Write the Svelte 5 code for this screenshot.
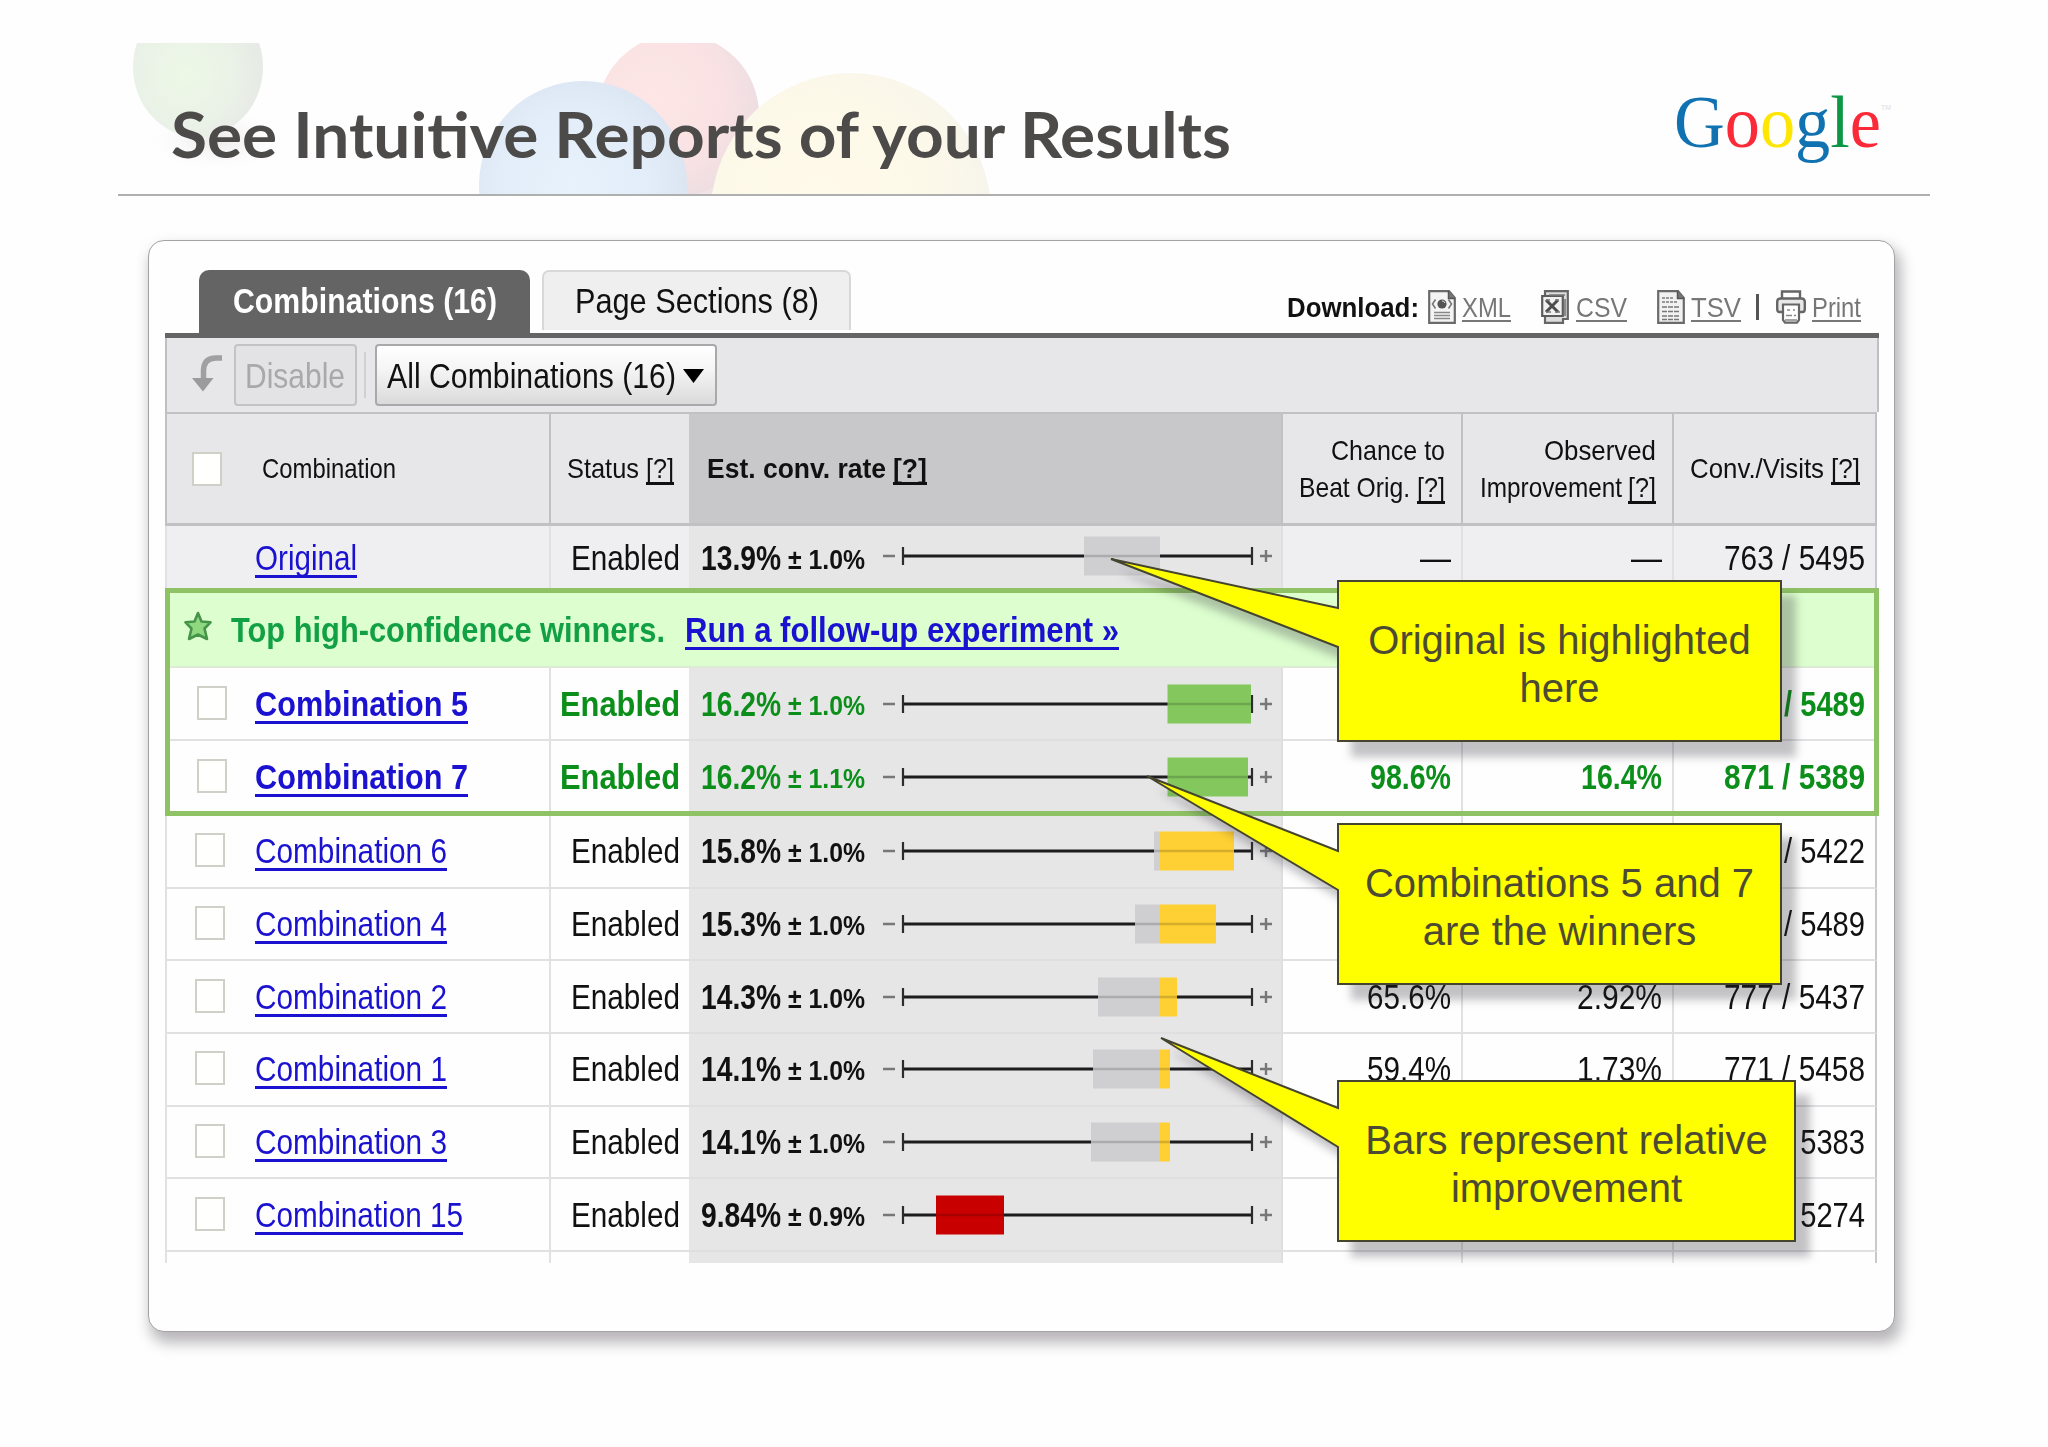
<script>
    /* Report rows: bars are [from, to, colour] in pixels along the 350px axis */
    const original = { name: 'Original', nameW: 102, rate: '13.9%', margin: '± 1.0%', bars: [[182, 258, 'gray']], chance: '—', improvement: '—', visits: '763 / 5495' }

    const winners = [
        { name: 'Combination 5', nameW: 213, rate: '16.2%', margin: '± 1.0%', bars: [[265.5, 349, 'green']], chance: '', improvement: '', visits: '/ 5489' },
        { name: 'Combination 7', nameW: 213, rate: '16.2%', margin: '± 1.1%', bars: [[265.5, 346, 'green']], chance: '98.6%', improvement: '16.4%', visits: '871 / 5389' }
    ]

    const others = [
        { name: 'Combination 6', nameW: 192, rate: '15.8%', margin: '± 1.0%', bars: [[252, 258, 'gray'], [258, 332, 'yellow']], chance: '', improvement: '', visits: '/ 5422' },
        { name: 'Combination 4', nameW: 192, rate: '15.3%', margin: '± 1.0%', bars: [[233, 258, 'gray'], [258, 314, 'yellow']], chance: '', improvement: '', visits: '/ 5489' },
        { name: 'Combination 2', nameW: 192, rate: '14.3%', margin: '± 1.0%', bars: [[196, 258, 'gray'], [258, 275, 'yellow']], chance: '65.6%', improvement: '2.92%', visits: '777 / 5437' },
        { name: 'Combination 1', nameW: 192, rate: '14.1%', margin: '± 1.0%', bars: [[191, 258, 'gray'], [258, 268, 'yellow']], chance: '59.4%', improvement: '1.73%', visits: '771 / 5458' },
        { name: 'Combination 3', nameW: 192, rate: '14.1%', margin: '± 1.0%', bars: [[189, 258, 'gray'], [258, 268, 'yellow']], chance: '', improvement: '', visits: '/ 5383' },
        { name: 'Combination 15', nameW: 208, rate: '9.84%', margin: '± 0.9%', bars: [[34, 102, 'red']], chance: '', improvement: '', visits: '/ 5274' }
    ]

    /* Callouts: the tail is the tip point followed by its two joints on the left edge */
    const callouts = [
        { x: 1338, y: 581, w: 443, h: 160, tip: [-227, -22], joints: [27, 66], lines: ['Original is highlighted', 'here'] },
        { x: 1338, y: 824, w: 443, h: 160, tip: [-191, -48], joints: [27, 66], lines: ['Combinations 5 and 7', 'are the winners'] },
        { x: 1338, y: 1081, w: 457, h: 160, tip: [-177, -43], joints: [27, 66], lines: ['Bars represent relative', 'improvement'] }
    ]

    /* Condenses a piece of text to the given width */
    function fit(node, width) {
        const natural = node.getBoundingClientRect().width
        if (!natural) return
        node.style.transform = `scaleX(${width / natural})`
        node.style.marginRight = `${width - natural}px`
    }

    function visitsWidth(text) {
        return text.startsWith('/') ? 81 : 141
    }
</script>

{#snippet help(w, gap)}
    <a class="help" style:margin-left="{gap}px" use:fit={w} href="#help">[?]</a>
{/snippet}

{#snippet row(item, kind)}
    <div class="row {kind}">
        <div class="cell name">
            {#if kind !== 'original'}<span class="box"></span>{/if}
            <a class="t" use:fit={item.nameW} href="#combination">{item.name}</a>
        </div>
        <div class="cell status"><span class="t" use:fit={kind === 'winner' ? 120 : 109}>Enabled</span></div>
        <div class="cell rate">
            <b class="t" use:fit={80}>{item.rate}</b>
            <b class="t small" use:fit={77}>{item.margin}</b>
            <svg class="axis" width="390" height="40" viewBox="-20 0 390 40">
                <path d="M-19 20h12M358 20h12M364 14v12" stroke="#77777a" stroke-width="2.4" />
                <path d="M1 20H350" stroke="#1c1c1e" stroke-width="2.8" />
                <path d="M1 11v18M350 11v18" stroke="#2c2c2e" stroke-width="2.2" />
                {#each item.bars as [from, to, colour]}
                    <rect class={colour} x={from} y="0.5" width={to - from} height="39" />
                    <path d="M{from} 20H{to}" stroke="#000" stroke-opacity="0.17" stroke-width="2.6" />
                {/each}
            </svg>
        </div>
        <div class="cell num">
            {#if item.chance === '—'}<span class="t" use:fit={31}>—</span>
            {:else if item.chance}<span class="t" use:fit={kind === 'winner' ? 81 : 84}>{item.chance}</span>{/if}
        </div>
        <div class="cell num">
            {#if item.improvement === '—'}<span class="t" use:fit={31}>—</span>
            {:else if item.improvement}<span class="t" use:fit={kind === 'winner' ? 81 : 85}>{item.improvement}</span>{/if}
        </div>
        <div class="cell num last"><span class="t" use:fit={visitsWidth(item.visits)}>{item.visits}</span></div>
    </div>
{/snippet}

<main>
    <header>
        <!-- Faded balls behind the title -->
        <svg class="balls" width="1812" height="151" viewBox="118 43 1812 151">
            <defs>
                <radialGradient id="g" cx="0.4" cy="0.55" r="0.65">
                    <stop offset="0" stop-color="#edf8e6" /><stop offset="0.6" stop-color="#eaf1e7" /><stop offset="1" stop-color="#e6e8e5" />
                </radialGradient>
                <radialGradient id="r" cx="0.35" cy="0.4" r="0.7">
                    <stop offset="0" stop-color="#fde6e4" /><stop offset="0.6" stop-color="#fae2e4" /><stop offset="1" stop-color="#ebdde1" />
                </radialGradient>
                <radialGradient id="b" cx="0.45" cy="0.5" r="0.6">
                    <stop offset="0" stop-color="#e7f2fc" /><stop offset="0.6" stop-color="#e2edf9" /><stop offset="1" stop-color="#d9e4f0" />
                </radialGradient>
                <radialGradient id="y" cx="0.4" cy="0.45" r="0.62">
                    <stop offset="0" stop-color="#fffaea" /><stop offset="0.6" stop-color="#fdf9e9" /><stop offset="1" stop-color="#f6f4ec" />
                </radialGradient>
                <radialGradient id="s">
                    <stop offset="0" stop-color="#e9e9e9" /><stop offset="1" stop-color="#fff" stop-opacity="0" />
                </radialGradient>
            </defs>
            <ellipse cx="215" cy="140" rx="75" ry="34" fill="url(#s)" />
            <ellipse cx="198" cy="67" rx="65" ry="70" fill="url(#g)" />
            <path d="M640 130H740L712 194H640Z" fill="#f0e4e7" />
            <circle cx="678" cy="115" r="81" fill="url(#r)" />
            <circle cx="583" cy="185" r="104" fill="url(#b)" />
            <circle cx="851" cy="213" r="140" fill="url(#y)" />
        </svg>
        <h1 use:fit={1060}>See Intuitive Reports of your Results</h1>
        <div class="logo">
            <span class="word" use:fit={207}><i class="lb">G</i><i class="lr">o</i><i class="ly">o</i><i class="lb">g</i><i class="lg">l</i><i class="lr">e</i></span>
            <sup>TM</sup>
        </div>
    </header>

    <section class="card">
        <div class="tabs">
            <div class="tab active"><span use:fit={264}>Combinations (16)</span></div>
            <div class="tab"><span use:fit={244}>Page Sections (8)</span></div>
            <div class="download">
                <b use:fit={132}>Download:</b>
                <svg width="28" height="34" viewBox="0 0 28 34" style:margin-left="9px">
                    <path d="M1.2 1.2H21L26.8 8V32.8H1.2Z" fill="#f4f4f4" stroke="#6a6a6a" stroke-width="2.2" />
                    <path d="M20.5 1v7.5H27" fill="#777" stroke="#555" stroke-width="1.5" />
                    <circle cx="14" cy="14" r="4.6" fill="#555" /><path d="M14 11a3 3 0 0 1 3 2" stroke="#ddd" fill="none" />
                    <path d="M7.5 9.5L4.5 14l3 4.5M20.5 9.5L23.5 14l-3 4.5" fill="none" stroke="#777" stroke-width="1.6" />
                    <path d="M6 22.5h16M6 25.5h16M6 28.5h16" stroke="#888" stroke-width="1.5" />
                </svg>
                <a style:margin-left="6px" use:fit={49} href="#xml">XML</a>
                <svg width="28" height="34" viewBox="0 0 28 34" style:margin-left="30px">
                    <path d="M4 1.2H26.8V29H22V32.8H4Z" fill="#ddd" stroke="#666" stroke-width="2.2" />
                    <path d="M1.2 6H21.8V26H1.2Z" fill="#f0f0f0" stroke="#5c5c5c" stroke-width="2.2" />
                    <path d="M5 10l12 12M17 10L5 22" stroke="#4c4c4c" stroke-width="3" />
                    <path d="M5 10h4M14 10h4M5 22h5M14 22h5M24 9v17M8 5h16" stroke="#777" stroke-width="1.6" />
                </svg>
                <a style:margin-left="7px" use:fit={51} href="#csv">CSV</a>
                <svg width="28" height="34" viewBox="0 0 28 34" style:margin-left="30px">
                    <path d="M1.2 1.2H21L26.8 8V32.8H1.2Z" fill="#f1f1f1" stroke="#6a6a6a" stroke-width="2.2" />
                    <path d="M20.5 1v7.5H27" fill="#777" stroke="#555" stroke-width="1.5" />
                    <path d="M5 8h11M5 12h16" stroke="#999" stroke-width="2" stroke-dasharray="3 1" />
                    <path d="M5 17h18M5 21.5h18M5 26h18M5 29.5h18" stroke="#777" stroke-width="1.7" stroke-dasharray="5 1" />
                </svg>
                <a style:margin-left="6px" use:fit={50} href="#tsv">TSV</a>
                <i class="bar"></i>
                <svg width="30" height="34" viewBox="0 0 30 34" style:margin-left="17px">
                    <path d="M6 9V1.5H24V9" fill="#fff" stroke="#666" stroke-width="2.4" />
                    <path d="M6.5 22H3.5Q1.2 22 1.2 19V12Q1.2 8.5 4.5 8.5H25.5Q28.8 8.5 28.8 12V19Q28.8 22 26.5 22H23.5" fill="#e8e8e8" stroke="#666" stroke-width="2.4" />
                    <path d="M7 14.5H23V30L21 32.6H9L7 30Z" fill="#fff" stroke="#666" stroke-width="2.2" />
                    <path d="M11 20h3M17 20h2M10 25.5h6M18 25.5h2M9 30h12" stroke="#888" stroke-width="1.6" />
                </svg>
                <a style:margin-left="6px" use:fit={49} href="#print">Print</a>
            </div>
        </div>

        <div class="toolbar">
            <svg class="arrow" width="32" height="38" viewBox="0 0 32 38">
                <path d="M30 4H24Q11.500 4 11.500 17V25" fill="none" stroke="#a0a0a2" stroke-width="5.5" />
                <path d="M0 24H21.500L11 37.500Z" fill="#9b9b9d" />
            </svg>
            <span class="button disabled"><span use:fit={100}>Disable</span></span>
            <i class="divider"></i>
            <span class="button">
                <span use:fit={289}>All Combinations (16)</span>
                <svg width="21" height="14" viewBox="0 0 21 14"><path d="M0 0H21L10.5 14Z" /></svg>
            </span>
        </div>

        <div class="table">
            <div class="row head">
                <div class="cell name"><span class="box"></span><span class="t" use:fit={134}>Combination</span></div>
                <div class="cell status"><span class="t" use:fit={72}>Status</span>{@render help(28, 7)}</div>
                <div class="cell rate"><b class="t" use:fit={179}>Est. conv. rate</b><b>{@render help(34, 7)}</b></div>
                <div class="cell num two">
                    <div><span use:fit={114}>Chance to</span></div>
                    <div><span use:fit={111}>Beat Orig.</span>{@render help(28, 7)}</div>
                </div>
                <div class="cell num two">
                    <div><span use:fit={112}>Observed</span></div>
                    <div><span use:fit={142}>Improvement</span>{@render help(28, 6)}</div>
                </div>
                <div class="cell num last"><span use:fit={134}>Conv./Visits</span>{@render help(29, 7)}</div>
            </div>

            {@render row(original, 'original')}

            <div class="winners">
                <div class="banner">
                    <svg width="30" height="32" viewBox="0 0 30 32">
                        <path d="M15 3L18.500 11.500 27.500 12.300 21.500 18.500 24 29 15 24.500 6 29 8.500 18.500 2.500 12.300 11.500 11.500Z" fill="#90d880" stroke="#45944a" stroke-width="2.6" stroke-linejoin="round" />
                    </svg>
                    <span use:fit={434}>Top high-confidence winners.</span>
                    <a use:fit={434} href="#follow-up">Run a follow-up experiment »</a>
                </div>
                {#each winners as item}
                    {@render row(item, 'winner')}
                {/each}
            </div>

            {#each others as item}
                {@render row(item, 'plain')}
            {/each}

            <!-- Next row, cut off by the end of the table -->
            <div class="row stub">
                <div class="cell"></div><div class="cell status"></div><div class="cell rate"></div>
                <div class="cell"></div><div class="cell"></div><div class="cell last"></div>
            </div>
        </div>
    </section>

    {#each callouts as { x, y, w, h, tip, joints, lines }}
        <div class="callout" style:left="{x}px" style:top="{y}px" style:width="{w}px" style:height="{h}px">
            <svg width={w} height={h}>
                <path d="M0 0H{w}V{h}H0V{joints[1]}L{tip[0]} {tip[1]}L0 {joints[0]}Z" />
            </svg>
            <p>{lines[0]}<br>{lines[1]}</p>
        </div>
    {/each}
</main>

<style>
    :global(body) { background: #fefefe; }

    main {
        position: relative;
        width: 2048px;
        height: 1447px;
        overflow: hidden;
        box-sizing: border-box;
        padding-top: 43px;
        font-family: "Liberation Sans", Arial, sans-serif;
        font-size: 35px;
        color: #111;
    }

    main * { box-sizing: border-box; }

    span, a, b, h1 {
        display: inline-block;
        flex: none;
        white-space: nowrap;
        transform-origin: 0 50%;
    }

    svg { flex: none; }

    /* Header */
    header {
        position: relative;
        display: flex;
        justify-content: space-between;
        align-items: center;
        width: 1812px;
        height: 153px;
        margin-left: 118px;
        padding: 0 39px 0 53px;
        border-bottom: 2px solid #afafaf;
    }

    .balls { position: absolute; left: 0; top: 0; }

    h1 {
        position: relative;
        margin: 31px 0 0;
        font: bold 63px/74px Lato, sans-serif;
        color: #4d4a4a;
    }

    .logo {
        position: relative;
        display: flex;
        margin-top: 6px;
        font: 75px/90px "Liberation Serif", serif;
    }

    .logo i { font-style: normal; }
    .logo sup { margin-top: 26px; font: 7px/10px "Liberation Sans", sans-serif; color: #ddd; }
    .lb { color: #1072b1; }
    .lr { color: #fb2a38; }
    .ly { color: #ffe600; }
    .lg { color: #0d9744; }

    /* Card */
    .card {
        width: 1747px;
        height: 1092px;
        margin: 44px 0 0 148px;
        padding: 29px 0 0 16px;
        border: 1px solid #a3a2a5;
        border-radius: 16px;
        background: #fefefe;
        box-shadow: 4px 9px 14px 2px rgba(60, 55, 65, .36);
    }

    .tabs {
        display: flex;
        width: 1714px;
        height: 68px;
        padding-left: 34px;
        border-bottom: 5px solid #636463;
    }

    .tab {
        display: flex;
        align-items: center;
        width: 309px;
        height: 60px;
        padding: 0 0 0 31px;
        border: 2px solid #d8d7d9;
        border-bottom: 0;
        border-radius: 7px 7px 0 0;
        background: #f0eff0;
    }

    .tab.active {
        width: 331px;
        height: 63px;
        margin-right: 12px;
        padding-left: 34px;
        padding-bottom: 2px;
        border: 0;
        border-radius: 10px 10px 0 0;
        background: #636463;
        color: #fff;
        font-weight: bold;
    }

    .download {
        display: flex;
        align-items: center;
        height: 73px;
        margin-left: 436px;
        font-size: 28px;
    }

    .download a { color: #77777a; text-underline-offset: 3px; text-decoration-thickness: 2px; }
    .download b, .download a { padding-top: 2px; }
    .download .bar { width: 3px; height: 26px; margin-left: 15px; background: #555; }

    .toolbar {
        display: flex;
        align-items: center;
        width: 1714px;
        height: 74px;
        padding-left: 25px;
        border: solid #bfbec0;
        border-width: 0 2px;
        background: #e7e6e8;
    }

    .button {
        display: flex;
        align-items: center;
        height: 62px;
        width: 342px;
        padding: 1px 0 0 10px;
        border: 2px solid #a9a9ab;
        border-radius: 4px;
        background: linear-gradient(#fff, #f5f5f6 40%, #dadadb);
    }

    .button.disabled {
        width: 123px;
        margin-left: 10px;
        padding-left: 9px;
        border-color: #c3c2c4;
        background: #e3e2e4;
        color: #a9a8aa;
    }

    .arrow { position: relative; top: -2px; }
    .button svg { margin-left: 7px; }
    .divider { width: 2px; height: 46px; margin: 0 9px 0 7px; background: #d0cfd1; }

    /* Table */
    .row {
        display: grid;
        grid-template-columns: 386px 138px 594px 180px 211px 203px;
        width: 1712px;
        height: 72.7px;
    }

    .cell {
        display: flex;
        align-items: center;
        padding-bottom: 2px;
        border: solid #e1e0e2;
        border-width: 0 2px 2px 0;
    }

    .cell .t { position: relative; top: 1px; }
    .cell:first-child { border-left-width: 2px; }
    .cell.status { border-right: 0; justify-content: flex-end; padding-right: 9px; }
    .cell.rate { padding-left: 12px; border-color: #dfdee0; background: #e7e6e7; }
    .cell.num { justify-content: flex-end; padding-right: 10px; }
    .cell.last { border-right-color: #c9c8ca; }

    .box + a { margin-left: 30px; }
    .winner .box + a { margin-left: 28px; }
    .original .name { padding-left: 88px; }
    .box { width: 30px; height: 34px; margin-left: 28px; border: 2px solid #d0d0c8; background: #fffffd; }
    .winner .box { margin-left: 30px; }

    a { color: #1a12d0; text-decoration: underline; text-decoration-thickness: 2.5px; text-underline-offset: 5px; text-decoration-skip-ink: none; }

    .small { margin-left: 7px; padding-top: 4px; font-size: 28px; }
    .axis { position: relative; top: 1px; margin-left: 17px; }
    .gray { fill: #cfced0; }
    .green { fill: #83c75d; }
    .yellow { fill: #fed034; }
    .red { fill: #c90000; }

    .head { height: 114px; font-size: 28px; }
    .head .cell { border: solid #c1c0c3; border-width: 2px 2px 3px 0; background: #e7e6e8; padding-bottom: 0; }
    .head .cell .t { top: 0; }
    .head .cell:first-child { border-left-width: 2px; }
    .head .cell.status { border-right: 0; padding-right: 15px; }
    .head .cell.rate { background: #c8c7c9; padding-left: 18px; }
    .head .num { padding-right: 16px; }
    .head .last { padding-right: 15px; }
    .head .box { margin-left: 25px; }
    .head .name .t { margin-left: 40px; }
    .head .two { flex-direction: column; justify-content: center; align-items: flex-end; line-height: 37px; }
    .help { color: #111; text-underline-offset: 4px; }

    .original { height: 62px; }
    .original .cell { padding-bottom: 0; border-bottom: 0; background: #efeef0; }
    .original .cell.rate { background: #e7e6e7; }
    .original .axis { top: -1px; }

    .winners { position: relative; width: 1712px; }

    .winners::after {
        content: '';
        position: absolute;
        inset: 0 -2px 0 0;
        border: 5px solid #8fc265;
    }

    .banner {
        display: flex;
        align-items: center;
        height: 80px;
        padding: 5px 0 0 18px;
        border-bottom: 2px solid #dcebd4;
        background: #ddffcf;
        font-weight: bold;
        color: #12a045;
    }

    .banner svg { margin: -8px 18px 0 0; }
    .banner a { margin-left: 20px; }

    .winner { height: 73px; font-weight: bold; color: #0c8f1a; }
    .winner:last-child { height: 75px; }
    .winner:last-child .cell { padding-bottom: 5px; border-bottom: 0; }

    .stub { height: 11px; }
    .stub .cell { border-bottom: 0; }

    /* Callouts */
    .callout {
        position: absolute;
        display: flex;
        justify-content: center;
        align-items: center;
    }

    .callout svg {
        position: absolute;
        left: 0;
        top: 0;
        overflow: visible;
        filter: drop-shadow(14px 15px 4px rgba(40, 35, 45, .28));
    }

    .callout path { fill: #ff0; stroke: #45452f; stroke-width: 2; }

    .callout p {
        position: relative;
        margin: 5px 0 0;
        font-size: 40px;
        line-height: 48px;
        text-align: center;
        white-space: nowrap;
        color: #4c4a33;
    }
</style>
